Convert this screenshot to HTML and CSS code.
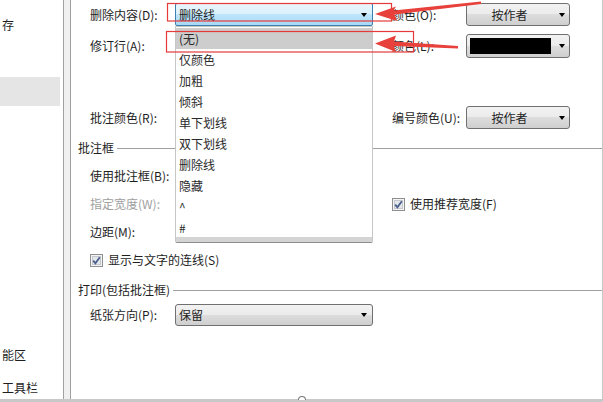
FILE: index.html
```html
<!DOCTYPE html>
<html lang="zh-CN">
<head>
  <meta charset="UTF-8" />
  <title>修订选项</title>
  <link rel="stylesheet" href="styles.css">
</head>
<body>
  <div class="window">
    <aside class="nav">
      <div class="nav-item first">存</div>
      <div class="nav-item active"></div>
      <div class="nav-item far">能区</div>
      <div class="nav-item last">工具栏</div>
    </aside>
    <div class="splitter"></div>

    <main class="options">
      <div class="row r1">
        <span class="label">删除内容(D):</span>
        <div class="combo hot">
          <span class="value">删除线</span>
          <span class="caret"></span>
          <ul class="droplist">
            <li class="selected">(无)</li>
            <li>仅颜色</li>
            <li>加粗</li>
            <li>倾斜</li>
            <li>单下划线</li>
            <li>双下划线</li>
            <li>删除线</li>
            <li>隐藏</li>
            <li>^</li>
            <li>#</li>
          </ul>
        </div>
        <span></span>
        <span class="label">颜色(O):</span>
        <div class="combo button"><span class="value">按作者</span><span class="caret"></span></div>
      </div>

      <div class="row r2">
        <span class="label">修订行(A):</span>
        <span></span>
        <span></span>
        <span class="label">颜色(L):</span>
        <div class="combo button swatch-combo"><span class="swatch"></span><span class="caret"></span></div>
      </div>

      <div class="row r3">
        <span class="label">批注颜色(R):</span>
        <span></span>
        <span></span>
        <span class="label">编号颜色(U):</span>
        <div class="combo button"><span class="value">按作者</span><span class="caret"></span></div>
      </div>

      <div class="group">批注框</div>

      <div class="row tall first-tall">
        <span class="label">使用批注框(B):</span>
      </div>
      <div class="row tall">
        <span class="label disabled">指定宽度(W):</span>
        <span></span>
        <span></span>
        <label class="check wide">
          <svg class="box" width="13" height="13" viewBox="0 0 13 13"><rect x="0.5" y="0.5" width="12" height="12" fill="#f4f4f4" stroke="#8e8f8f"/><rect x="2.5" y="2.5" width="8" height="8" fill="#e3e6ea" stroke="#c4c7cc"/><path d="M3.2 6.6 L5.4 9.3 L9.8 3.3" fill="none" stroke="#4a5f8c" stroke-width="1.8"/></svg>
          使用推荐宽度(F)
        </label>
      </div>
      <div class="row tall">
        <span class="label">边距(M):</span>
      </div>
      <div class="row tall">
        <label class="check full">
          <svg class="box" width="13" height="13" viewBox="0 0 13 13"><rect x="0.5" y="0.5" width="12" height="12" fill="#f4f4f4" stroke="#8e8f8f"/><rect x="2.5" y="2.5" width="8" height="8" fill="#e3e6ea" stroke="#c4c7cc"/><path d="M3.2 6.6 L5.4 9.3 L9.8 3.3" fill="none" stroke="#4a5f8c" stroke-width="1.8"/></svg>
          显示与文字的连线(S)
        </label>
      </div>

      <div class="group print">打印(包括批注框)</div>

      <div class="row r8">
        <span class="label">纸张方向(P):</span>
        <div class="combo plain"><span class="value">保留</span><span class="caret"></span></div>
      </div>
    </main>

    <svg class="marks" width="603" height="399" viewBox="0 0 603 399">
      <rect x="167.5" y="3.5" width="224" height="17.5" fill="none" stroke="#e53a3a" stroke-width="1.2"/>
      <rect x="166.5" y="31.5" width="247" height="20.5" fill="none" stroke="#e53a3a" stroke-width="1.2"/>
      <polygon points="375,14 396,6.5 393.5,10.5 481,1.5 481,4 394.5,14.5 397,21" fill="#e8403a"/>
      <polygon points="375,43.5 396,35.5 394,41.5 458,46 458,48.5 394,46 396,52" fill="#e8403a"/>
    </svg>
  </div>
  <div class="statusbar"><span class="grip"></span></div>
</body>
</html>
```

FILE: styles.css
```css
body {
  margin: 0;
  width: 603px;
  height: 402px;
  overflow: hidden;
  background: #fff;
  color: #1e1e1e;
  font-family: "Noto Sans CJK SC", "Liberation Sans", sans-serif;
  font-size: 12px;
  line-height: 16px;
}
.window {
  display: flex;
  height: 399px;
  position: relative;
}

/* left navigation */
.nav {
  width: 63px;
  flex: none;
}
.nav-item {
  height: 20px;
  line-height: 20px;
  padding-left: 2px;
}
.nav-item.first {
  margin-top: 15px;
}
.nav-item.active {
  margin-top: 42px;
  width: 60px;
  height: 29px;
  padding: 0;
  background: #e5e5e5;
}
.nav-item.far {
  margin-top: 239px;
}
.nav-item.last {
  margin-top: 13px;
}
.splitter {
  width: 6px;
  flex: none;
  background: #f0f0f0;
  border-left: 1px solid #a0a0a0;
  border-right: 1px solid #a0a0a0;
}

/* options panel */
.options {
  flex: 1;
  position: relative;
  padding-top: 3px;
  border-right: 1px solid #c8c8c8;
}
.row {
  display: grid;
  grid-template-columns: 85px 198px 19px 74px 104px;
  align-items: center;
  margin-left: 19px;
}
.r1 { height: 23px; }
.r2 { height: 24px; margin-top: 8px; }
.r3 { height: 23px; margin-top: 48px; }
.tall { height: 28px; }
.first-tall { margin-top: 6px; }
.r8 { height: 22px; margin-top: 6px; }
.label {
  white-space: nowrap;
}
.disabled {
  color: #a0a0a0;
}
.group {
  display: flex;
  align-items: center;
  height: 16px;
  margin-top: 11px;
  padding-left: 7px;
  white-space: nowrap;
}
.group::after {
  content: "";
  flex: 1;
  margin-left: 3px;
  border-top: 1px solid #a0a0a0;
}
.group.print {
  margin-top: 8px;
}

/* combo boxes */
.combo {
  position: relative;
  display: flex;
  align-items: center;
  height: 100%;
  box-sizing: border-box;
  padding-left: 3px;
  border: 1px solid #707070;
  border-radius: 3px;
  background: linear-gradient(#f2f2f2, #ebebeb 50%, #dddddd 50%, #cfcfcf);
}
.combo .value {
  flex: 1;
}
.caret {
  width: 0;
  height: 0;
  margin-right: 5px;
  border-top: 4px solid #000;
  border-left: 3.5px solid transparent;
  border-right: 3.5px solid transparent;
}
.combo.hot {
  border-color: #3c7fb1;
  border-radius: 2px;
  background: linear-gradient(#eaf6fd, #d9f0fc 50%, #bee6fd 50%, #a7d9f5);
}
.combo.button .value {
  text-align: center;
  padding-right: 10px;
}
.combo.button .caret {
  margin-right: 4px;
}
.swatch-combo {
  padding: 2px 0 2px 3px;
}
.swatch {
  flex: none;
  width: 81px;
  height: 16px;
  margin-right: auto;
  background: #000;
}

/* opened list */
.droplist {
  position: absolute;
  top: calc(100% + 1px);
  left: -1px;
  width: 198px;
  box-sizing: border-box;
  margin: 0;
  padding: 1px 0 0;
  list-style: none;
  background: #fff;
  border: 1px solid #c6c6c6;
  border-bottom-color: #8e8e8e;
  border-radius: 0 0 2px 2px;
  z-index: 2;
}
.droplist li {
  height: 21px;
  line-height: 21px;
  padding-left: 3px;
  color: #2a2a2a;
}
.droplist li.selected {
  background: #cdcdcd;
}
.droplist::after {
  content: "";
  display: block;
  height: 5px;
  margin-top: -1px;
  background: #d4d4d4;
}

/* checkboxes */
.check {
  display: flex;
  align-items: center;
  gap: 5px;
  white-space: nowrap;
}
.check.wide {
  grid-column: 4 / span 2;
}
.check.full {
  grid-column: 1 / span 3;
}
.box {
  flex: none;
}

/* annotation layer */
.marks {
  position: absolute;
  top: 0;
  left: 0;
  pointer-events: none;
  z-index: 3;
}
.statusbar {
  height: 3px;
  background: #c8c8c8;
  display: flex;
  justify-content: center;
}
.grip {
  width: 6px;
  height: 3px;
  margin-top: -3px;
  border: 1px solid #777;
  border-bottom: none;
  border-radius: 4px 4px 0 0;
  background: #fff;
}
```
